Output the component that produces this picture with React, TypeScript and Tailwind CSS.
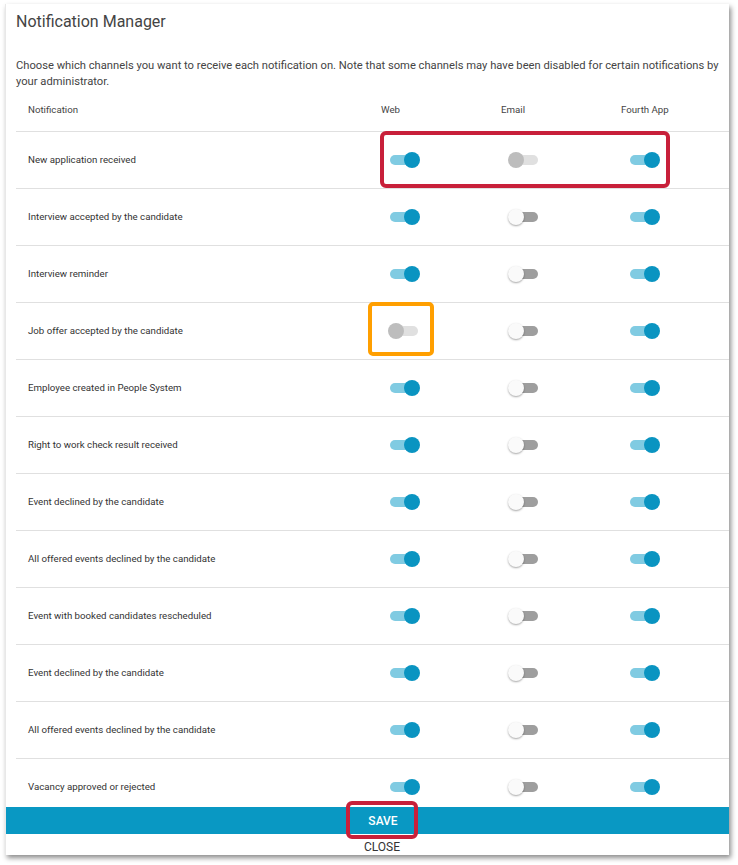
import React from "react";

type S = "on" | "off" | "dis";

function Toggle({ s }: { s: S }) {
  const track =
    s === "on" ? "bg-[#80cbe2]" : s === "off" ? "bg-[#9e9e9e]" : "bg-[#e0e0e0]";
  const thumb =
    s === "on"
      ? "left-[16px] bg-[#0a94c1]"
      : s === "off"
      ? "left-0 bg-[#fafafa] shadow-[0_1px_2px_rgba(0,0,0,0.35)]"
      : "left-0 bg-[#bdbdbd]";
  return (
    <div className="relative w-[32px] h-[16px] ml-[19px]">
      <div className={`absolute left-[2px] top-[3px] w-[28px] h-[10px] rounded-full ${track}`} />
      <div className={`absolute top-0 w-[16px] h-[16px] rounded-full ${thumb}`} />
    </div>
  );
}

const rows: [string, S, S, S][] = [
  ["New application received", "on", "dis", "on"],
  ["Interview accepted by the candidate", "on", "off", "on"],
  ["Interview reminder", "on", "off", "on"],
  ["Job offer accepted by the candidate", "dis", "off", "on"],
  ["Employee created in People System", "on", "off", "on"],
  ["Right to work check result received", "on", "off", "on"],
  ["Event declined by the candidate", "on", "off", "on"],
  ["All offered events declined by the candidate", "on", "off", "on"],
  ["Event with booked candidates rescheduled", "on", "off", "on"],
  ["Event declined by the candidate", "on", "off", "on"],
  ["All offered events declined by the candidate", "on", "off", "on"],
  ["Vacancy approved or rejected", "on", "off", "on"],
];

export default function App() {
  return (
    <div
      className="w-[738px] h-[865px] bg-white pt-[4px] pl-[5px]"
      style={{ fontFamily: "Roboto, 'Liberation Sans', sans-serif" }}
    >
      <div className="w-[724px] h-[851px] bg-white shadow-[2px_3px_5px_rgba(0,0,0,0.45)] border-l border-[#e8e8e8] flex flex-col">
        <div className="pl-[10px] pt-[8px]">
          <div className="text-[16px] leading-[20px] text-[#444]">Notification Manager</div>
          <div className="mt-[26px] text-[11.2px] leading-[16px] text-[#444] pr-[6px]">
            Choose which channels you want to receive each notification on. Note that some
            channels may have been disabled for certain notifications by your administrator.
          </div>
        </div>
        <div className="h-[717px] overflow-hidden pl-[10px]">
          <div className="flex items-center h-[42px] border-b border-[#e0e0e0] text-[9.7px] text-[#444]">
            <div className="w-[353px] pl-[12px]">Notification</div>
            <div className="w-[120px] pl-[12px]">Web</div>
            <div className="w-[120px] pl-[12px]">Email</div>
            <div className="w-[120px] pl-[12px]">Fourth App</div>
          </div>
          {rows.map(([label, a, b, c], i) => (
            <div
              key={i}
              className="relative flex items-center h-[57px] border-b border-[#e0e0e0] text-[9.7px] text-[#333]"
            >
              <div className="w-[353px] pl-[12px]">{label}</div>
              <div className="w-[120px]">
                <Toggle s={a} />
              </div>
              <div className="w-[120px]">
                <Toggle s={b} />
              </div>
              <div className="w-[120px]">
                <Toggle s={c} />
              </div>
              {i === 0 && (
                <div className="absolute left-[364px] top-[-1px] w-[290px] h-[57px] border-[4px] border-[#c8203a] rounded-[6px]" />
              )}
              {i === 3 && (
                <div className="absolute left-[352px] top-[-1px] w-[66px] h-[54px] border-[4px] border-[#ff9f00] rounded-[5px]" />
              )}
            </div>
          ))}
        </div>
        <div className="relative h-[27px] bg-[#0998c3] flex items-center justify-center pl-[31px]">
          <span className="text-[12px] font-medium text-white">SAVE</span>
          <div className="absolute left-[340px] top-[-6px] w-[72px] h-[38px] border-[4px] border-[#c8203a] rounded-[6px]" />
        </div>
        <div className="flex justify-center pl-[29px] pt-[5px] text-[12px] leading-[16px] text-[#333]">
          CLOSE
        </div>
      </div>
    </div>
  );
}
